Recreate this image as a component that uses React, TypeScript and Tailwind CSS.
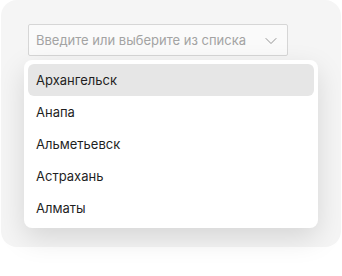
import { ChevronDown } from 'lucide-react';

const cities = ['Архангельск', 'Анапа', 'Альметьевск', 'Астрахань', 'Алматы'];

export default function App() {
  return (
    <div className="h-[276px] w-[342px] bg-white px-px font-['Inter','Noto_Sans',sans-serif]">
      <div className="h-[247px] rounded-[16px] bg-[#f5f5f5] pl-[23px] pt-6">
        <div className="ml-[4px] flex h-[32px] w-[260px] items-center justify-between rounded-[2px] border border-[#d6d6d6] bg-[#fafafa] pl-[7px] pr-[6px]">
          <span className="pt-[2px] text-[13px] text-[#a3a3a3]">Введите или выберите из списка</span>
          <ChevronDown size={20} strokeWidth={1.1} className="mt-[1px] text-[#8a8a8a]" />
        </div>
        <ul className="mt-[4px] w-[294px] rounded-[8px] bg-white p-[4px] shadow-[0_10px_28px_rgba(0,0,0,0.13)]">
          {cities.map((city, i) => (
            <li
              key={city}
              className={`flex h-[32px] items-center rounded-[6px] px-[8px] pt-[2px] text-[13px] text-[#1f1f1f] ${i === 0 ? 'bg-[#e6e6e6]' : ''}`}
            >
              {city}
            </li>
          ))}
        </ul>
      </div>
    </div>
  );
}
